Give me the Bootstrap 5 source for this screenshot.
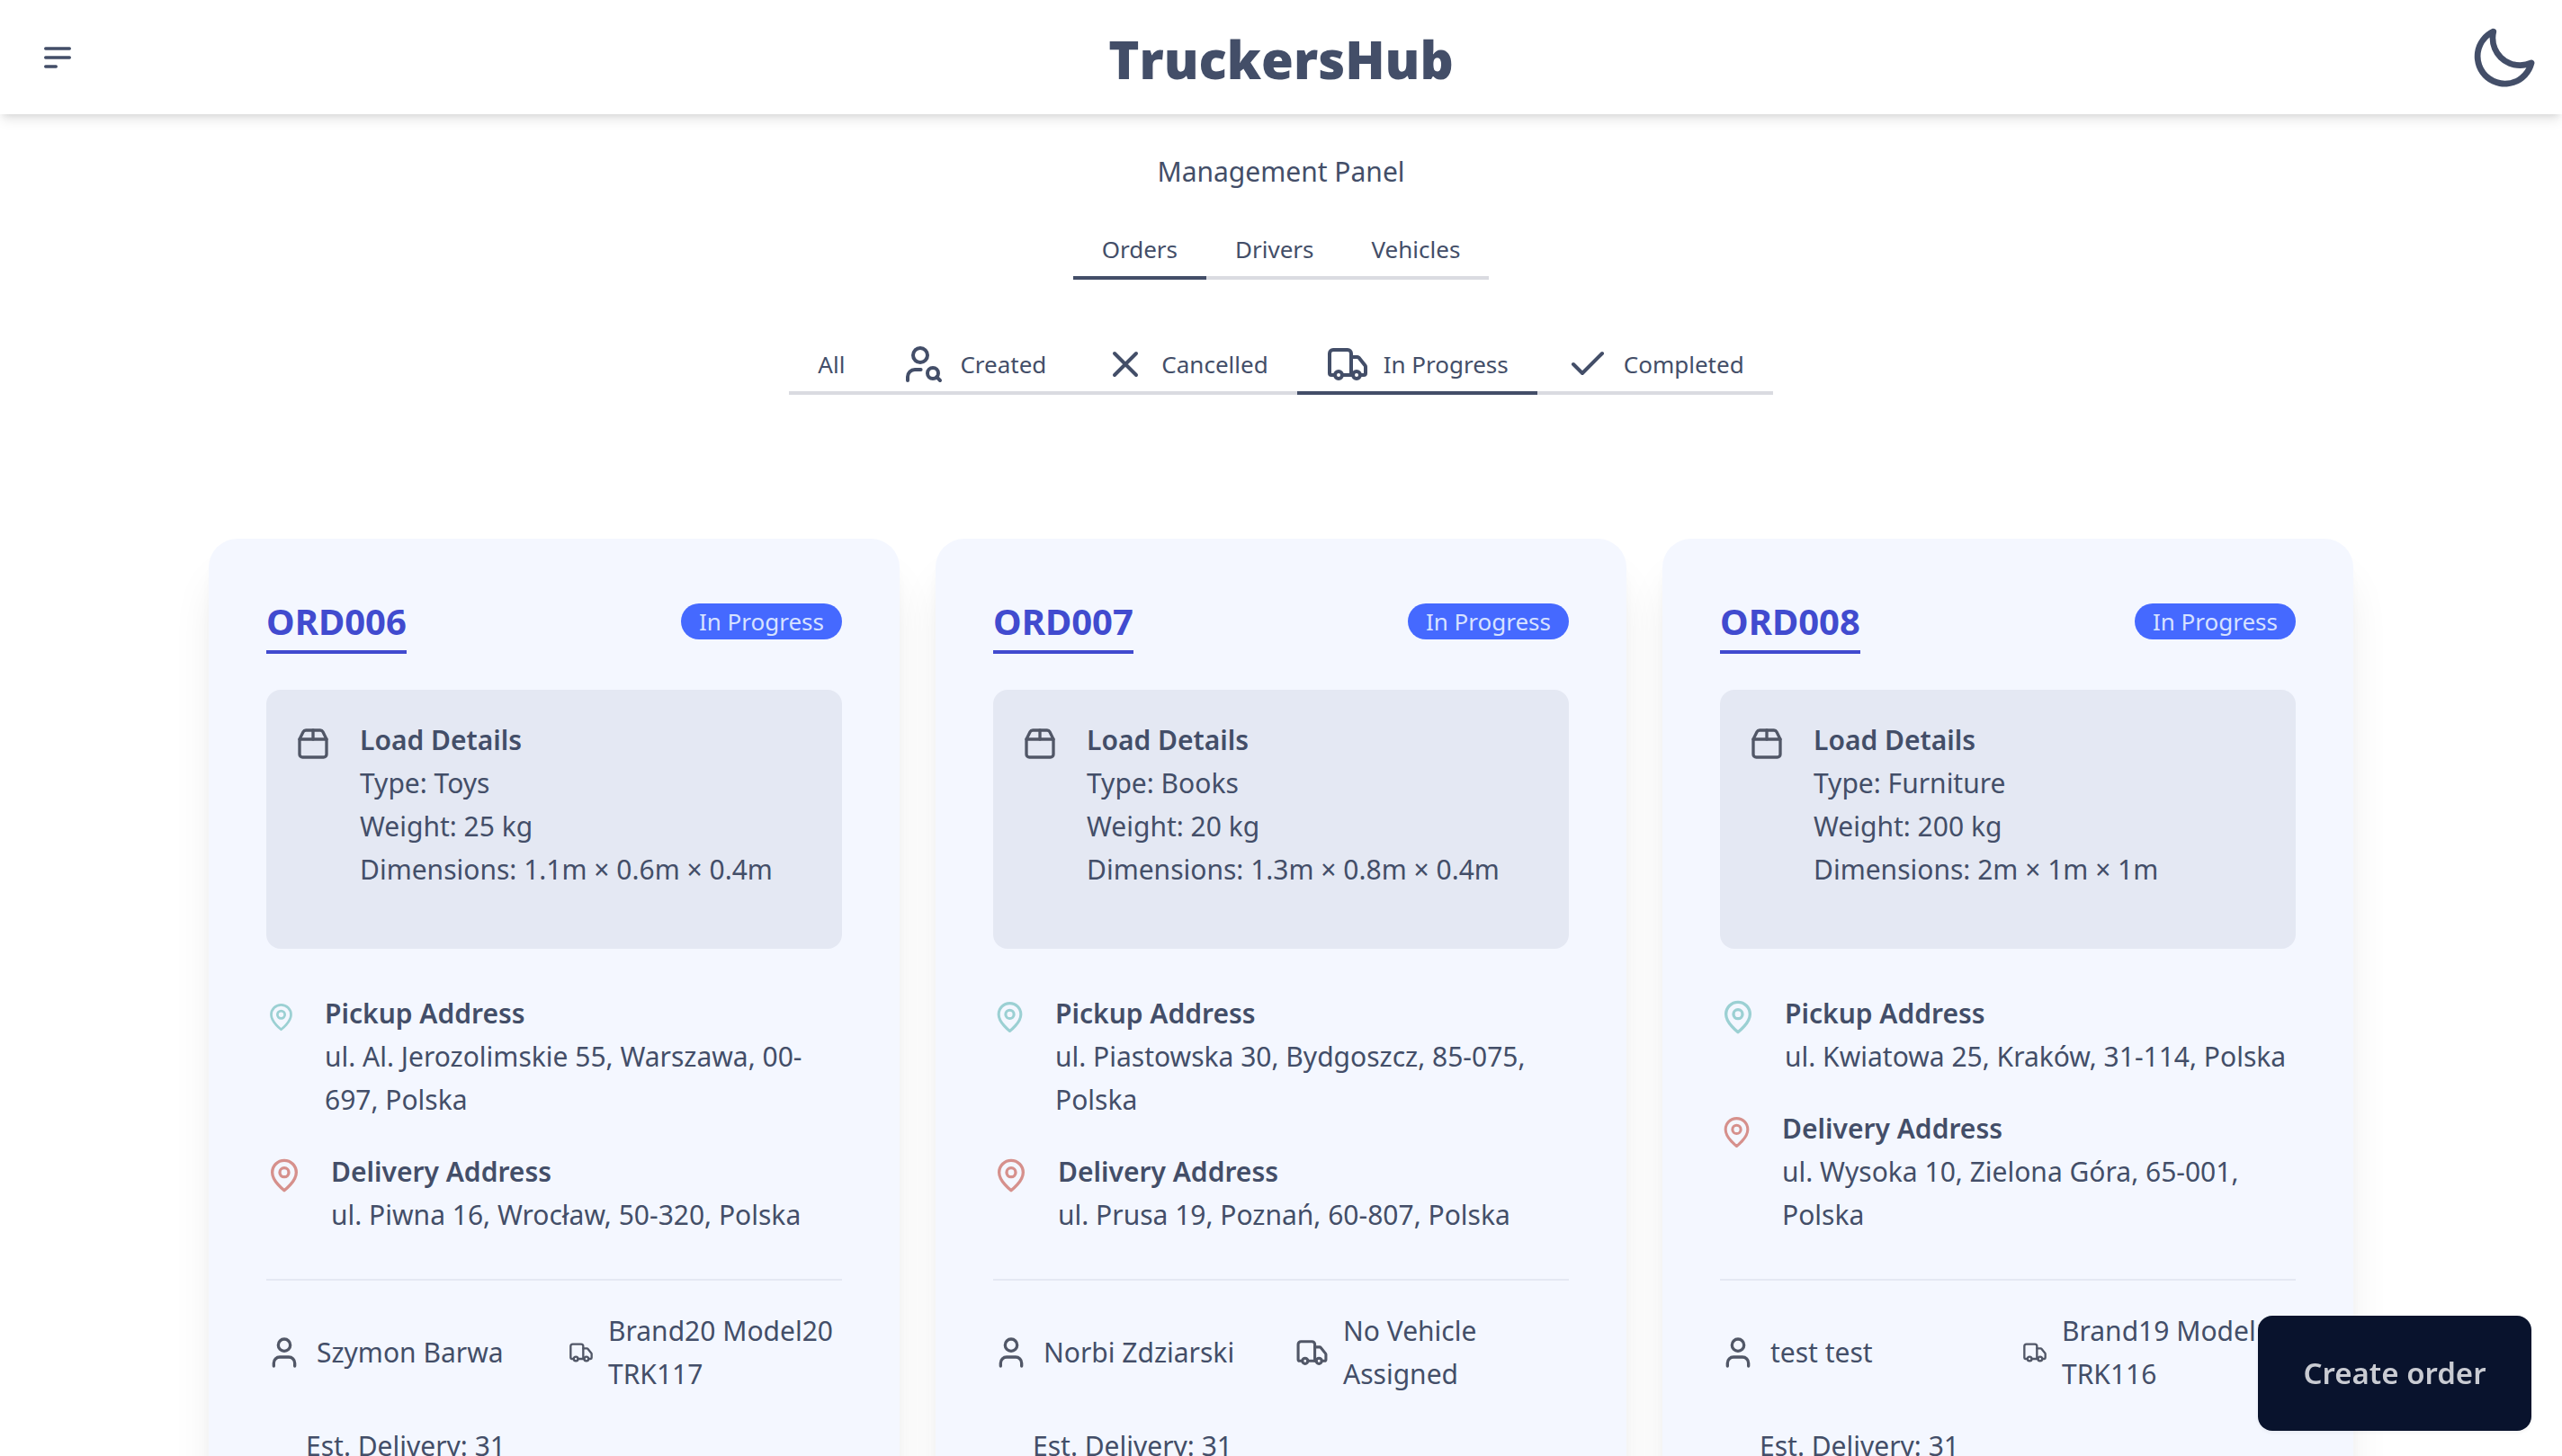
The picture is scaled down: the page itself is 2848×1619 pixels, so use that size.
<!DOCTYPE html>
<html lang="en">
<head>
<meta charset="utf-8">
<meta name="viewport" content="width=device-width, initial-scale=1">
<title>TruckersHub</title>
<link href="https://cdn.jsdelivr.net/npm/bootstrap@5.3.0/dist/css/bootstrap.min.css" rel="stylesheet">
<style>
  body { font-family: "Noto Sans", "Open Sans", sans-serif; font-size: 30px; line-height: 48px; color: #434e68; background: #fff; }
  .ico { fill: none; stroke: currentColor; stroke-width: 2; stroke-linecap: round; stroke-linejoin: round; flex: none; width: 40px; height: 40px; }
  .topbar { height: 127px; padding: 0 16px; background: #fff; box-shadow: 0 8px 12px -2px rgba(0,0,0,.1), 0 4px 8px -4px rgba(0,0,0,.1); }
  .round-btn { width: 96px; height: 96px; color: #434e68; }
  .moon { width: 80px; height: 80px; fill: currentColor; }
  .brand-name { font-family: "Open Sans", "Noto Sans", sans-serif; font-size: 58px; font-weight: 800; line-height: 80px; padding-top: 4px; color: inherit; }
  .panel-name { font-size: 30px; line-height: 48px; margin: 40px 0 32px; }
  .tab-strip .nav-link { height: 64px; padding: 0 32px; font-size: 26px; line-height: 40px; color: #434e68; border-bottom: 4px solid #dadbe1; border-radius: 0; }
  .tab-strip .nav-link.active { border-color: #434e68; }
  .tab-strip .ico { width: 48px; height: 48px; }
  .filters { margin-top: 64px; }
  .orders { max-width: 2384px; margin-top: 160px; }
  .orders .row { --bs-gutter-x: 40px; --bs-gutter-y: 40px; }
  .order { height: 100%; padding: 64px; border-radius: 32px; background: #f4f7ff; box-shadow: 0 40px 50px -10px rgba(0,0,0,.1), 0 16px 20px -12px rgba(0,0,0,.1); }
  .order-no { font-size: 40px; line-height: 56px; font-weight: 700; color: #414bcf; border-bottom: 4px solid; padding-bottom: 4px; }
  .status { height: 40px; padding: 0 20px; margin-top: 8px; border-radius: 20px; font-size: 26px; line-height: 40px; background: #4569ff; color: #d7e2ff; }
  .load { padding: 32px 32px 64px; margin: 40px 0 48px; border-radius: 16px; background: #e4e8f3; }
  .ttl { font-size: 30px; line-height: 48px; font-weight: 600; }
  .pair { gap: 32px; }
  .dark-ico { color: #515767; }
  .pick { color: #9bd0d3; }
  .drop { color: #d6908c; }
  .w28 { width: 28px; } .w33 { width: 33px; } .w37 { width: 37px; }
  .facts { display: grid; grid-template-columns: 1fr 1fr; gap: 32px; margin-top: 47px; padding-top: 32px; border-top: 2px solid #e4e8f3; }
  .facts > div { min-height: 96px; gap: 16px; }
  .create { right: 34px; bottom: 28px; width: 304px; height: 128px; border-radius: 16px; background: #09132d; color: #c9cbd2; font-size: 33px; font-weight: 600; box-shadow: 0 2px 4px rgba(0,0,0,.05); }
  .create:hover { background: #09132d; color: #fff; }
</style>
</head>
<body>
<svg class="d-none" aria-hidden="true">
  <symbol id="pin" viewBox="0 0 24 24"><path d="M20 10c0 6-8 12-8 12s-8-6-8-12a8 8 0 0 1 16 0Z"/><circle cx="12" cy="10" r="3"/></symbol>
  <symbol id="box" viewBox="0 0 24 24"><path d="M3 9h18v10a2 2 0 0 1-2 2H5a2 2 0 0 1-2-2V9Z"/><path d="m3 9 2.45-4.9A2 2 0 0 1 7.24 3h9.52a2 2 0 0 1 1.8 1.1L21 9"/><path d="M12 3v6"/></symbol>
  <symbol id="user" viewBox="0 0 24 24"><path d="M19 21v-2a4 4 0 0 0-4-4H9a4 4 0 0 0-4 4v2"/><circle cx="12" cy="7" r="4"/></symbol>
  <symbol id="truck" viewBox="0 0 24 24"><path d="M14 18V6a2 2 0 0 0-2-2H4a2 2 0 0 0-2 2v11a1 1 0 0 0 1 1h2"/><path d="M15 18H9"/><path d="M19 18h2a1 1 0 0 0 1-1v-3.65a1 1 0 0 0-.22-.624l-3.48-4.35A1 1 0 0 0 17.52 8H14"/><circle cx="17" cy="18" r="2"/><circle cx="7" cy="18" r="2"/></symbol>
  <symbol id="cal" viewBox="0 0 24 24"><rect x="3" y="4" width="18" height="18" rx="2"/><path d="M16 2v4M8 2v4M3 10h18"/></symbol>
</svg>

<header class="topbar d-flex align-items-center justify-content-between">
  <button type="button" class="btn p-0 border-0 round-btn d-flex align-items-center justify-content-center" aria-label="Menu">
    <svg class="ico" viewBox="0 0 24 24"><path d="M4 6h16M4 12h16M4 18h7"/></svg>
  </button>
  <a href="#" class="brand-name text-decoration-none">TruckersHub</a>
  <button type="button" class="btn p-0 border-0 round-btn d-flex align-items-center justify-content-center" aria-label="Dark mode">
    <svg class="moon" viewBox="0 0 24 24"><path d="M21.64,13a1,1,0,0,0-1.05-.14,8.05,8.05,0,0,1-3.37.73A8.15,8.15,0,0,1,9.08,5.49a8.59,8.59,0,0,1,.25-2A1,1,0,0,0,8,2.36,10.14,10.14,0,1,0,22,14.05,1,1,0,0,0,21.64,13Zm-9.5,6.69A8.14,8.14,0,0,1,7.08,5.22v.27A10.15,10.15,0,0,0,17.22,15.63a9.79,9.79,0,0,0,2.1-.22A8.11,8.11,0,0,1,12.14,19.73Z"/></svg>
  </button>
</header>

<main>
  <h1 class="panel-name text-center fw-normal">Management Panel</h1>
  <nav class="nav tab-strip justify-content-center">
    <a href="#" class="nav-link active d-flex align-items-center">Orders</a>
    <a href="#" class="nav-link d-flex align-items-center">Drivers</a>
    <a href="#" class="nav-link d-flex align-items-center">Vehicles</a>
  </nav>
  <nav class="nav tab-strip filters justify-content-center">
    <a href="#" class="nav-link d-flex align-items-center gap-3">All</a>
    <a href="#" class="nav-link d-flex align-items-center gap-3"><svg class="ico" viewBox="0 0 24 24"><circle cx="10" cy="7" r="4"/><path d="M10.3 15H7a4 4 0 0 0-4 4v2"/><circle cx="17" cy="17" r="3"/><path d="m21 21-1.9-1.9"/></svg>Created</a>
    <a href="#" class="nav-link d-flex align-items-center gap-3"><svg class="ico" viewBox="0 0 24 24"><path d="M18 6 6 18M6 6l12 12"/></svg>Cancelled</a>
    <a href="#" class="nav-link active d-flex align-items-center gap-3"><svg class="ico"><use href="#truck"/></svg>In Progress</a>
    <a href="#" class="nav-link d-flex align-items-center gap-3"><svg class="ico" viewBox="0 0 24 24"><path d="M20 6 9 17l-5-5"/></svg>Completed</a>
  </nav>

  <section class="orders mx-auto">
    <div class="row row-cols-1 row-cols-lg-3">
      <div class="col">
        <article class="order">
          <div class="d-flex justify-content-between align-items-start">
            <a href="#" class="order-no text-decoration-none">ORD006</a>
            <span class="status">In Progress</span>
          </div>
          <div class="load d-flex pair">
            <svg class="ico mt-2 dark-ico"><use href="#box"/></svg>
            <div><h2 class="ttl m-0">Load Details</h2><div>Type: Toys</div><div>Weight: 25 kg</div><div>Dimensions: 1.1m × 0.6m × 0.4m</div></div>
          </div>
          <div class="d-flex flex-column pair">
            <div class="d-flex pair"><svg class="ico mt-2 pick w33"><use href="#pin"/></svg>
              <div><h3 class="ttl m-0">Pickup Address</h3><div>ul. Al. Jerozolimskie 55, Warszawa, 00-<br>697, Polska</div></div></div>
            <div class="d-flex pair"><svg class="ico mt-2 drop"><use href="#pin"/></svg>
              <div><h3 class="ttl m-0">Delivery Address</h3><div>ul. Piwna 16, Wrocław, 50-320, Polska</div></div></div>
          </div>
          <div class="facts">
            <div class="d-flex align-items-center"><svg class="ico dark-ico"><use href="#user"/></svg><span>Szymon Barwa</span></div>
            <div class="d-flex align-items-center"><svg class="ico dark-ico w28"><use href="#truck"/></svg><span>Brand20 Model20<br>TRK117</span></div>
            <div class="d-flex"><svg class="ico dark-ico w28 align-self-end"><use href="#cal"/></svg><span>Est. Delivery: 31</span></div>
          </div>
        </article>
      </div>
      <div class="col">
        <article class="order">
          <div class="d-flex justify-content-between align-items-start">
            <a href="#" class="order-no text-decoration-none">ORD007</a>
            <span class="status">In Progress</span>
          </div>
          <div class="load d-flex pair">
            <svg class="ico mt-2 dark-ico"><use href="#box"/></svg>
            <div><h2 class="ttl m-0">Load Details</h2><div>Type: Books</div><div>Weight: 20 kg</div><div>Dimensions: 1.3m × 0.8m × 0.4m</div></div>
          </div>
          <div class="d-flex flex-column pair">
            <div class="d-flex pair"><svg class="ico mt-2 pick w37"><use href="#pin"/></svg>
              <div><h3 class="ttl m-0">Pickup Address</h3><div>ul. Piastowska 30, Bydgoszcz, 85-075,<br>Polska</div></div></div>
            <div class="d-flex pair"><svg class="ico mt-2 drop"><use href="#pin"/></svg>
              <div><h3 class="ttl m-0">Delivery Address</h3><div>ul. Prusa 19, Poznań, 60-807, Polska</div></div></div>
          </div>
          <div class="facts">
            <div class="d-flex align-items-center"><svg class="ico dark-ico"><use href="#user"/></svg><span>Norbi Zdziarski</span></div>
            <div class="d-flex align-items-center"><svg class="ico dark-ico w37"><use href="#truck"/></svg><span>No Vehicle<br>Assigned</span></div>
            <div class="d-flex"><svg class="ico dark-ico w28 align-self-end"><use href="#cal"/></svg><span>Est. Delivery: 31</span></div>
          </div>
        </article>
      </div>
      <div class="col">
        <article class="order">
          <div class="d-flex justify-content-between align-items-start">
            <a href="#" class="order-no text-decoration-none">ORD008</a>
            <span class="status">In Progress</span>
          </div>
          <div class="load d-flex pair">
            <svg class="ico mt-2 dark-ico"><use href="#box"/></svg>
            <div><h2 class="ttl m-0">Load Details</h2><div>Type: Furniture</div><div>Weight: 200 kg</div><div>Dimensions: 2m × 1m × 1m</div></div>
          </div>
          <div class="d-flex flex-column pair">
            <div class="d-flex pair"><svg class="ico mt-2 pick"><use href="#pin"/></svg>
              <div><h3 class="ttl m-0">Pickup Address</h3><div>ul. Kwiatowa 25, Kraków, 31-114, Polska</div></div></div>
            <div class="d-flex pair"><svg class="ico mt-2 drop w37"><use href="#pin"/></svg>
              <div><h3 class="ttl m-0">Delivery Address</h3><div>ul. Wysoka 10, Zielona Góra, 65-001,<br>Polska</div></div></div>
          </div>
          <div class="facts">
            <div class="d-flex align-items-center"><svg class="ico dark-ico"><use href="#user"/></svg><span>test test</span></div>
            <div class="d-flex align-items-center"><svg class="ico dark-ico w28"><use href="#truck"/></svg><span>Brand19 Model19<br>TRK116</span></div>
            <div class="d-flex"><svg class="ico dark-ico w28 align-self-end"><use href="#cal"/></svg><span>Est. Delivery: 31</span></div>
          </div>
        </article>
      </div>
    </div>
  </section>
</main>

<button type="button" class="btn create position-fixed border-0">Create order</button>
<script src="https://cdn.jsdelivr.net/npm/bootstrap@5.3.0/dist/js/bootstrap.bundle.min.js"></script>
</body>
</html>
